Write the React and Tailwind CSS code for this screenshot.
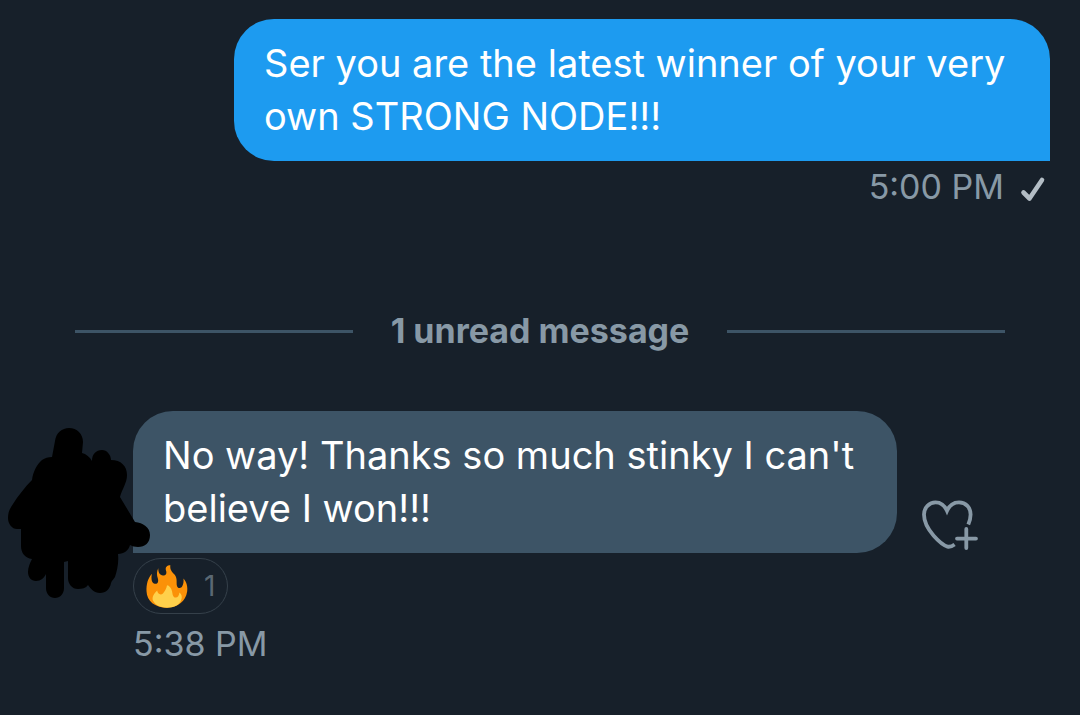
import { useState } from 'react';

function Check() {
  return (
    <svg width="26" height="32" viewBox="0 0 26 32" fill="none" aria-label="Sent">
      <path d="M3.5 21.5 9.5 27.5 22 9" stroke="#b3bdc5" strokeWidth="4.6" strokeLinecap="round" strokeLinejoin="round" />
    </svg>
  );
}

function HeartPlus() {
  return (
    <svg width="56" height="50" viewBox="0 0 56 50" fill="none" stroke="#8899a6" strokeWidth="3.8" aria-hidden="true">
      <path d="M32.6 44.5C30 46.4 27.5 47 25.5 46.6C20 45 2 30 2 14.6C2 7.5 7.3 2.4 13.5 2.4C19.5 2.4 23 6.3 25 10.8C27 6.3 31 2.4 37 2.4C44 2.4 48.6 7.5 48.6 14.6C48.6 18.3 47.7 21.3 46.3 24.6" />
      <path d="M44.3 29V48M35 38.6H54" strokeLinecap="round" />
    </svg>
  );
}

function Fire() {
  return (
    <svg width="42" height="43" viewBox="0 0 124 128" aria-hidden="true">
      <path
        d="M36 10C36 24 41 31 50 31C59 31 62 25 59 16C56 7 62 1 72 1C70 14 77 21 85 29C94 40 89 54 92 63C95 71 105 70 108 62C111 56 112 49 111 40C121 51 124 66 122 79C118 107 95 127 62 127C26 127 2 107 1 78C0 58 5 39 17 26C14 42 17 55 26 56C35 57 37 49 35 41C31 30 31 19 36 10Z"
        fill="#fb9108"
      />
      <path
        d="M62 60C61 70 55 77 50 85C43 91 33 86 33 76C22 85 17 96 20 106C27 119 41 127 62 127C84 127 98 119 104 105C108 95 106 88 99 82C98 91 94 97 88 97C79 96 79 88 77 78C75 68 69 61 62 60Z"
        fill="#ffd04b"
      />
    </svg>
  );
}

// avatar hidden under a marker scribble
function Scribble() {
  return (
    <svg
      className="relative z-10 mt-[17px] -mr-[17px] shrink-0"
      width="142"
      height="170"
      viewBox="8 428 142 170"
      aria-hidden="true"
    >
      <path d="M52 457L55 441C56 433 62 428 69 428C77 428 83 434 83 442L82 453C86 454 90 457 92 461C92 454 96 450 102 450C107 450 111 455 111 460C121 460 127 466 127 475C127 483 122 489 120 497L135 522C143 523 150 527 150 535C150 543 145 547 138 547C135 547 132 546 130 545C129 550 124 554 118 554C119 563 117 571 115 577C114 579 112 580 111 583C110 589 106 593 100 593C94 593 91 589 88 585C86 588 82 589 78 589C72 589 68 584 68 578V561L64 562V588C64 594 60 598 55 598C50 598 46 594 46 588V574C44 578 41 581 36 581C31 581 28 577 28 572C28 567 30 563 32 559C25 558 21 553 21 546V529H17C12 529 8 524 8 518C8 512 10 508 13 504C18 496 25 487 32 480C33 472 37 464 42 460C45 458 48 457 52 457Z" />
    </svg>
  );
}

function Divider({ children }) {
  return (
    <div className="mt-[92px] flex items-center gap-[38px] px-[75px]">
      <span className="h-[3px] flex-1 bg-[#3d5466]" />
      <h2 className="text-[34px] leading-[52px] font-bold text-[#8899a6]">{children}</h2>
      <span className="h-[3px] flex-1 bg-[#3d5466]" />
    </div>
  );
}

export default function App() {
  const [liked, setLiked] = useState(false);

  return (
    <main className="min-h-screen bg-[#17202a] pt-[19px] pb-10 font-['Inter','Liberation_Sans',sans-serif] text-white">
      <section className="flex flex-col items-end px-[30px]">
        <p className="w-4/5 rounded-[40px] rounded-br-none bg-[#1d9bf0] px-[30px] py-[18px] text-[38px] leading-[53px]">
          Ser you are the latest winner of your very own STRONG NODE!!!
        </p>
        <div className="flex items-center gap-4 pr-1 text-[34px] leading-[52px] text-[#8899a6]">
          <time>5:00 PM</time>
          <Check />
        </div>
      </section>

      <Divider>1 unread message</Divider>

      <section className="mt-[54px] flex items-start pl-2">
        <Scribble />
        <div className="flex-1">
          <div className="flex items-end gap-[25px] pr-[102px]">
            <p className="flex-1 rounded-[40px] rounded-bl-none bg-[#3d5466] px-[30px] py-[18px] text-[38px] leading-[53px]">
              No way! Thanks so much stinky I can't believe I won!!!
            </p>
            <button type="button" aria-label="Add reaction" className="mb-[3px]" onClick={() => setLiked(!liked)}>
              <HeartPlus />
            </button>
          </div>
          <button
            type="button"
            aria-pressed={liked}
            className="mt-[5px] flex h-14 items-center gap-4 rounded-full border border-[#35404a] px-3 text-[28px] text-[#5b6873]"
          >
            <Fire />
            1
          </button>
          <time className="mt-1 block text-[34px] leading-[52px] text-[#8899a6]">5:38 PM</time>
        </div>
      </section>
    </main>
  );
}
